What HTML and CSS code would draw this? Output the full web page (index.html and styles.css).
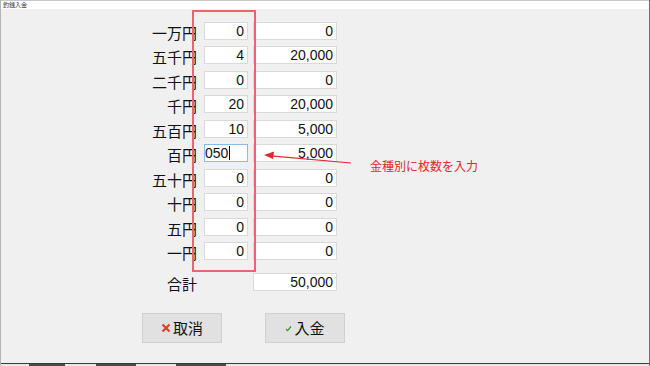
FILE: index.html
```html
<!DOCTYPE html>
<html lang="ja">
<head>
    <meta charset="UTF-8">
    <meta name="viewport" content="width=device-width, initial-scale=1.0">
    <title>釣銭入金</title>
    <link rel="stylesheet" href="styles.css">
</head>
<body>
    <div class="window">
        <div class="titlebar">釣銭入金</div>

        <div class="content">
            <!-- 金種ごとの枚数と金額 -->
            <div class="denoms">
                <span class="label">一万円</span><span class="box count">0</span><span class="box amount">0</span>
                <span class="label">五千円</span><span class="box count">4</span><span class="box amount">20,000</span>
                <span class="label">二千円</span><span class="box count">0</span><span class="box amount">0</span>
                <span class="label">千円</span><span class="box count">20</span><span class="box amount">20,000</span>
                <span class="label">五百円</span><span class="box count">10</span><span class="box amount">5,000</span>
                <span class="label">百円</span><span class="box count editing">050<i class="caret"></i></span><span class="box amount">5,000</span>
                <span class="label">五十円</span><span class="box count">0</span><span class="box amount">0</span>
                <span class="label">十円</span><span class="box count">0</span><span class="box amount">0</span>
                <span class="label">五円</span><span class="box count">0</span><span class="box amount">0</span>
                <span class="label">一円</span><span class="box count">0</span><span class="box amount">0</span>
            </div>

            <div class="denoms total">
                <span class="label">合計</span><span></span><span class="box amount">50,000</span>
            </div>

            <div class="actions">
                <button class="btn">
                    <svg class="icon" width="10" height="10" viewBox="0 0 10 10">
                        <path d="M1.5 1.5 L8.5 8.5 M8.5 1.5 L1.5 8.5" stroke="#d8412f" stroke-width="2.2" fill="none"/>
                    </svg>取消
                </button>
                <button class="btn">
                    <svg class="icon" width="7" height="7" viewBox="0 0 7 7">
                        <path d="M1 4 L2.6 5.6 L6 1.5" stroke="#2e9a3c" stroke-width="1.3" fill="none"/>
                    </svg>入金
                </button>
            </div>
        </div>

        <div class="taskbar">
            <span class="task t1"></span><span class="task t2"></span><span class="task t3"></span>
        </div>

        <!-- 注記: 枚数欄の枠と矢印 -->
        <div class="frame"></div>
        <svg class="arrow" width="100" height="20" viewBox="0 0 100 20">
            <line x1="92" y1="15" x2="12" y2="7.8" stroke="#e3262f" stroke-width="1.2"/>
            <polygon points="5,7 15,3.6 14,11" fill="#e3262f"/>
        </svg>
        <div class="note">金種別に枚数を入力</div>
    </div>
</body>
</html>
```

FILE: styles.css
```css
body {
    margin: 0;
    font-family: "Liberation Sans", "Noto Sans CJK JP", sans-serif;
    background-color: #f0f0f0;
}

.window {
    position: relative;
    width: 650px;
    height: 366px;
    box-sizing: border-box;
    display: flex;
    flex-direction: column;
    background-color: #f0f0f0;
    border-left: 1px solid #b4b4b4;
    border-right: 1px solid #6e6e6e;
    overflow: hidden;
}

.titlebar {
    height: 8px;
    border-top: 1px solid #c9c9c9;
    background-color: #fff;
    font-family: "Noto Sans CJK JP", sans-serif;
    font-size: 6px;
    line-height: 8px;
    padding-left: 2px;
    color: #333;
}

.content {
    flex: 1;
    padding-top: 13px;
}

.denoms {
    display: grid;
    grid-template-columns: 203px 49px 84px;
    row-gap: 6.44px;
}

.label {
    box-sizing: border-box;
    font-family: "Noto Sans CJK JP", sans-serif;
    font-size: 15px;
    line-height: 18px;
    text-align: right;
    padding-right: 7px;
    padding-top: 2px;
    height: 18px;
    color: #111;
}

.box {
    height: 18px;
    box-sizing: border-box;
    background-color: #fff;
    border: 1px solid #d9d9d9;
    font-size: 14px;
    line-height: 16px;
    text-align: right;
    padding-right: 3px;
    color: #111;
}

.count {
    width: 44px;
}

.amount {
    width: 84px;
}

.editing {
    text-align: left;
    padding-left: 0;
    border-color: #8cbbe8;
}

.caret {
    display: inline-block;
    width: 1px;
    height: 14px;
    background-color: #111;
    vertical-align: -2px;
    margin-left: 1px;
}

.total {
    margin-top: 13px;
}

.actions {
    display: flex;
    gap: 43px;
    padding-left: 141px;
    margin-top: 22px;
}

.btn {
    width: 80px;
    height: 30px;
    display: flex;
    align-items: center;
    justify-content: center;
    gap: 2px;
    background-color: #e1e1e1;
    border: 1px solid #d0d0d0;
    font-family: "Noto Sans CJK JP", sans-serif;
    font-size: 15px;
    color: #111;
    padding: 0;
}

.icon {
    margin-top: 1px;
}

.taskbar {
    height: 3px;
    border-top: 1px solid #3b3b3b;
    background-color: #e9e9e9;
    display: flex;
    box-sizing: border-box;
}

.task {
    background-color: #4a4a4a;
}

.t1 { width: 36px; margin-left: 28px; }
.t2 { width: 40px; margin-left: 31px; }
.t3 { width: 50px; margin-left: 40px; }

.frame {
    position: absolute;
    left: 191px;
    top: 10px;
    width: 60px;
    height: 258px;
    border: 2px solid #e9666f;
}

.arrow {
    position: absolute;
    left: 258px;
    top: 148px;
}

.note {
    position: absolute;
    left: 369px;
    top: 158px;
    font-family: "Noto Sans CJK JP", sans-serif;
    font-size: 12px;
    line-height: 16px;
    color: #e3262f;
}
```
